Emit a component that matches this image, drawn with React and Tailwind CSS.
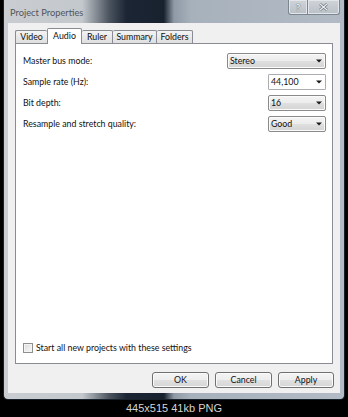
import React from "react";

function Arrow() {
  return (
    <svg width="6" height="4" viewBox="0 0 6 4" className="shrink-0">
      <path d="M0 0.5 H6 L3 3.5 Z" fill="#1a1a1a" />
    </svg>
  );
}

function Combo({ value, width, editable }) {
  const cls = editable
    ? "bg-white border-[#abadb3] rounded-[1px]"
    : "bg-[linear-gradient(to_bottom,#f4f4f4_0%,#ececec_50%,#dfdfdf_51%,#d4d4d4_100%)] border-[#8a8a8a] rounded-[2px] shadow-[inset_0_0_0_1px_#fbfbfb]";
  return (
    <div className={`h-[16px] ${width} border ${cls} flex items-center justify-between pl-[2px] pr-[3px]`}>
      <span className="text-[8.8px] leading-none text-[#111]">{value}</span>
      <Arrow />
    </div>
  );
}

function Row({ label, children }) {
  return (
    <div className="flex items-center justify-between h-[16px]">
      <span className="text-[8.8px] leading-none text-[#111]">{label}</span>
      {children}
    </div>
  );
}

function Btn({ children, w }) {
  return (
    <div className={`h-[16px] ${w} border border-[#707070] rounded-[3px] bg-[linear-gradient(to_bottom,#f4f4f4_0%,#ededed_50%,#e0e0e0_51%,#d6d6d6_100%)] shadow-[inset_0_0_0_1px_#fafafa] flex items-center justify-center text-[8.8px] leading-none text-[#111]`}>
      {children}
    </div>
  );
}

export default function App() {
  const tabUn =
    "h-[13px] border-t border-[#898c95] bg-[linear-gradient(to_bottom,#f3f3f3_0%,#e9e9e9_50%,#dfdfdf_100%)] rounded-t-[2px] flex items-center justify-center text-[8.8px] leading-none text-[#111]";
  return (
    <div className="w-[348px] h-[417px] bg-black overflow-hidden flex flex-col font-['Lato',sans-serif]">
      <div className="ml-[3px] w-[342px] h-[400px] shrink-0 flex flex-col border-x border-b border-[#18202c] rounded-b-[5px] px-[4px] pb-[6px] bg-[linear-gradient(to_right,#c9cdd1_0%,#c3c8cd_23%,#4a535e_31%,#1b2534_36%,#18222f_47%,#8f9aa6_50%,#a7b1bc_55%,#b2bbc5_100%)]">
        {/* title bar */}
        <div className="h-[23px] shrink-0 flex items-start">
          <span className="pl-[2px] pt-[8px] text-[9.3px] leading-none text-[#50565e]">Project Properties</span>
          <div className="ml-auto flex">
            <div className="w-[20px] h-[15px] border border-t-0 border-[#7d858e] rounded-bl-[3px] bg-[linear-gradient(to_bottom,#cfd4d9,#b9c0c7)] shadow-[inset_0_0_0_1px_#e2e6ea] flex items-center justify-center">
              <span className="text-[10px] font-bold leading-none text-[#eef0f2] [text-shadow:0_0_1px_#5c636b,0_0_1px_#5c636b]">?</span>
            </div>
            <div className="w-[32px] h-[15px] border border-t-0 border-l-0 border-[#7d858e] rounded-br-[3px] bg-[linear-gradient(to_bottom,#cfd4d9,#b9c0c7)] shadow-[inset_0_0_0_1px_#e2e6ea] flex items-center justify-center">
              <svg width="9" height="8" viewBox="0 0 9 8">
                <path d="M1 1 L8 7 M8 1 L1 7" stroke="#6a7179" strokeWidth="2.6" />
                <path d="M1 1 L8 7 M8 1 L1 7" stroke="#eef0f2" strokeWidth="1.2" />
              </svg>
            </div>
          </div>
        </div>
        {/* client */}
        <div className="flex-1 bg-[#f0f0f0] flex flex-col px-[7px] pt-[5px]">
          <div className="flex items-end h-[15px] relative z-10">
            <div className={`${tabUn} w-[32px] border-l`}>Video</div>
            <div className="h-[16px] w-[35px] mb-[-1px] bg-white border border-b-0 border-[#898c95] rounded-t-[2px] flex items-start justify-center pt-[3px] text-[8.8px] leading-none text-[#111]">
              Audio
            </div>
            <div className={`${tabUn} w-[31px] border-r`}>Ruler</div>
            <div className={`${tabUn} w-[44px] border-r`}>Summary</div>
            <div className={`${tabUn} w-[36px] border-r`}>Folders</div>
          </div>
          <div className="h-[321px] shrink-0 bg-white border border-[#898c95] flex flex-col pl-[7px] pr-[6px] pt-[9px] pb-[10px]">
            <div className="flex flex-col gap-[5px]">
              <Row label="Master bus mode:">
                <Combo value="Stereo" width="w-[99px]" />
              </Row>
              <Row label="Sample rate (Hz):">
                <Combo value="44,100" width="w-[58px]" editable />
              </Row>
              <Row label="Bit depth:">
                <Combo value="16" width="w-[58px]" />
              </Row>
              <Row label="Resample and stretch quality:">
                <Combo value="Good" width="w-[58px]" />
              </Row>
            </div>
            <div className="flex-1" />
            <div className="flex items-center gap-[3px]">
              <div className="w-[10px] h-[10px] border border-[#8e8f8f] bg-[linear-gradient(135deg,#dcdcdc,#f8f8f8)] shadow-[inset_0_0_0_1px_#f4f4f4]" />
              <span className="text-[8.8px] leading-none text-[#111]">Start all new projects with these settings</span>
            </div>
          </div>
          <div className="flex justify-end gap-[6px] mt-[8px] mr-[-1px]">
            <Btn w="w-[57px]">OK</Btn>
            <Btn w="w-[57px]">Cancel</Btn>
            <Btn w="w-[56px]">Apply</Btn>
          </div>
        </div>
      </div>
      <div className="flex-1 flex items-center justify-center">
        <span className="text-[11px] leading-none text-[#d4d4d4] font-['Liberation_Sans',sans-serif]">445x515 41kb PNG</span>
      </div>
    </div>
  );
}
